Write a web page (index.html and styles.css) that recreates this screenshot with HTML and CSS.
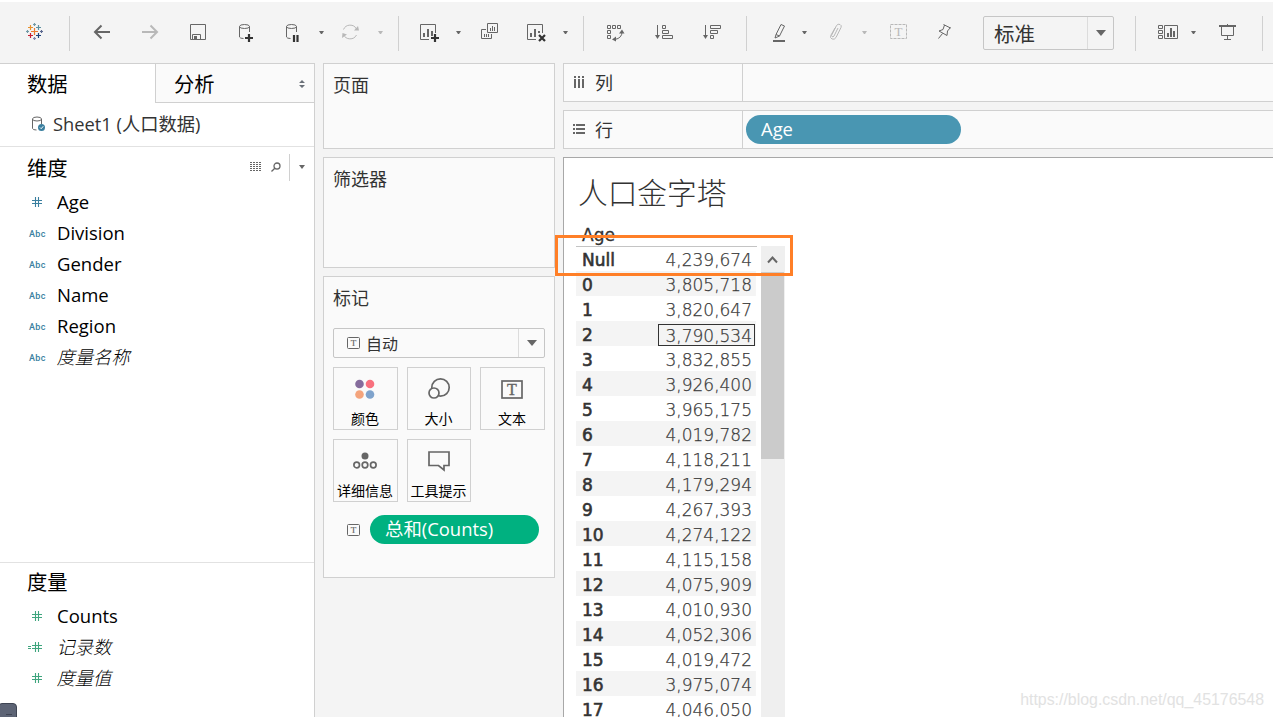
FILE: index.html
```html
<!DOCTYPE html>
<html lang="zh-CN">

<head>
    <meta charset="UTF-8">
    <meta name="viewport" content="width=device-width, initial-scale=1.0">
    <title>人口金字塔</title>
    <link rel="stylesheet" href="styles.css">
</head>

<body>

    <div class="toolbar">
        <svg class="icon logo" viewBox="0 0 24 24">
            <path stroke="#eb7b30" d="M12.500 8v7M9 11.500h7" />
            <path stroke="#e8912d" d="M8.500 5v5M6 7.500h5" />
            <path stroke="#5c8fa0" d="M16.500 5v5M14 7.500h5" />
            <path stroke="#c72035" d="M8.500 13v5M6 15.500h5" />
            <path stroke="#1f457e" d="M16.500 13v5M14 15.500h5" />
            <path stroke="#7099a6" d="M12.500 3v3M11 4.500h3" />
            <path stroke="#8088b0" d="M12.500 17v3M11 18.500h3" />
            <path stroke="#7199a6" d="M5.500 10v3M4 11.500h3" />
            <path stroke="#59678f" d="M19.500 10v3M18 11.500h3" />
        </svg>
        <i class="line l1"></i>
        <svg class="icon back" viewBox="0 0 24 24"><path stroke-width="2" d="M20 12H5M11.500 5.500L5 12l6.500 6.500" /></svg>
        <svg class="icon off" viewBox="0 0 24 24"><path stroke-width="2" d="M4 12h15M12.500 5.500L19 12l-6.500 6.500" /></svg>
        <svg class="icon" viewBox="0 0 24 24"><path d="M4.500 4.500h15v15h-15zM6.500 19v-4.500h8V19" /><path class="fill" d="M8 16h3v3H8z" /></svg>
        <svg class="icon" viewBox="0 0 24 24">
            <ellipse cx="10.500" cy="6.500" rx="5" ry="2" /><path d="M5.500 6.500V17q.5 1.500 4 1.500M15.500 6.500V12" />
            <path class="dark" d="M15 14v8M11 18h8" />
        </svg>
        <svg class="icon pause" viewBox="0 0 24 24">
            <ellipse cx="11.500" cy="6.500" rx="5" ry="2" /><path d="M6.500 6.500V17q.5 1.500 4 1.500M16.500 6.500V12" />
            <path class="dark" d="M14 15v7M17.500 15v7" />
        </svg>
        <i class="caret"></i>
        <svg class="icon off refresh" viewBox="0 0 24 24">
            <path d="M5.500 9.500A7.200 7.200 0 0 1 18.500 9M5.500 14.500A7.200 7.200 0 0 0 18.500 15" />
            <path class="fill" d="M16 10.500h5l-1-4.500zM4 18l.5-5 4.500 1.500z" />
        </svg>
        <i class="caret off c2"></i>
        <i class="line l2"></i>
        <svg class="icon sheet" viewBox="0 0 24 24">
            <path d="M12 19.500H3.500v-15h15V13" /><path stroke-width="2" d="M7 13v4M11 9v8M15 11v5" />
            <path class="dark" d="M18 14v8M14 18h8" />
        </svg>
        <i class="caret"></i>
        <svg class="icon dup" viewBox="0 0 24 24">
            <path d="M9.500 3.500h10v9h-10zM12.500 8v3M14.500 6v5M16.500 7v4M8 9.500H3.500v9h10V14M6.500 14v3M8.500 14v3M10.500 14v3" />
        </svg>
        <svg class="icon clear" viewBox="0 0 24 24">
            <path d="M11 19.500H2.500v-15h15V13" /><path stroke-width="2" d="M6 13v4M10 9v8M14 11v2" />
            <path class="dark" d="M14 15l6 6M20 15l-6 6" />
        </svg>
        <i class="caret"></i>
        <i class="line l3"></i>
        <svg class="icon swap" viewBox="0 0 24 24">
            <path d="M3.500 5.500h3v3h-3zM8.500 5.500h3v3h-3zM13.500 5.500h3v3h-3zM3.500 10.500h3v3h-3zM3.500 15.500h3v3h-3zM18 12q0 6-7 7.500" />
            <path class="fill" d="M15 13.500h5.500L18 9.500zM12 16.500v5l-4-2z" />
        </svg>
        <svg class="icon" viewBox="0 0 24 24">
            <path d="M5.500 5v12M10.500 5.500h3v3h-3zM10.500 10.500h6v3h-6zM10.500 15.500h10v3h-10z" /><path class="fill" d="M3 15h5l-2.500 4z" />
        </svg>
        <svg class="icon" viewBox="0 0 24 24">
            <path d="M5.500 5v12M10.500 5.500h10v3h-10zM10.500 10.500h7v3h-7zM10.500 15.500h3v3h-3z" /><path class="fill" d="M3 15h5l-2.500 4z" />
        </svg>
        <i class="line l4"></i>
        <svg class="icon pen" viewBox="0 0 24 24">
            <path d="M14 4.500l3.500 1.500-5 10-3.500-1.500zM9 14.500l-1 3.500 4.500-2" /><path stroke-width="2" d="M6 21h12" />
        </svg>
        <i class="caret c4"></i>
        <svg class="icon off clip" viewBox="0 0 24 24">
            <path d="M14 8l-4 8q-1 1.500-2 .5t0-2l4.500-9q1.500-2 3.500-1t1 3l-5 10q-1.500 2.500-4 1.500t-1-4l4-7" />
        </svg>
        <i class="caret off c5"></i>
        <svg class="icon off label" viewBox="0 0 24 24">
            <rect x="4.500" y="4.500" width="16" height="14" stroke-dasharray="3 1" /><text x="12.500" y="16">T</text>
        </svg>
        <svg class="icon pin" viewBox="0 0 24 24">
            <path d="M11.500 4.500l7 3.500M12.500 5l-1.500 4.500-4 1.500 8 4.500.5-4.500 3-3.500M10.500 13.500l-4 5" />
        </svg>
        <div class="select fit"><span>标准</span><b></b></div>
        <i class="line l5"></i>
        <svg class="icon show" viewBox="0 0 24 24">
            <path d="M2.500 5.500h4v3h-4zM2.500 10.500h4v3h-4zM2.500 15.500h4v3h-4zM8.500 5.500h13v13h-13z" /><path stroke-width="2" d="M12 13v4M15 8v9M18 11v6" />
        </svg>
        <i class="caret"></i>
        <svg class="icon present" viewBox="0 0 24 24">
            <path stroke-width="2" d="M3 6h17" /><path d="M5.500 6v9.500h12V6M11.500 4v2M11.500 15.500v4M8 19.500h7" />
        </svg>
        <i class="line l6"></i>
    </div>

    <div class="main">
        <div class="data">
            <div class="tabs">
                <div class="tab on">数据</div>
                <div class="tab">分析
                    <svg class="updown" viewBox="0 0 6 8"><path d="M0 3l3-3 3 3zM0 5h6L3 8z" /></svg>
                </div>
            </div>
            <div class="source">
                <svg class="db" viewBox="0 0 16 18">
                    <ellipse cx="6" cy="4" rx="4.500" ry="2" /><path d="M1.500 4v9.500q.5 1.500 4 1.500M10.500 4v5" />
                    <circle cx="10.500" cy="12.500" r="3.500" /><path class="tick" d="M9 12.500l1.200 1.200 2-2.400" />
                </svg>
                <span>Sheet1 (人口数据)</span>
            </div>
            <div class="fields dims">
                <div class="head">
                    <h2>维度</h2>
                    <svg class="list" viewBox="0 0 12 10"><path stroke-dasharray="2 1" d="M0 .5h12M0 2.500h12M0 4.500h12M0 6.500h12M0 8.500h12" /></svg>
                    <svg class="search" viewBox="0 0 10 10"><circle cx="6" cy="4" r="3" /><path d="M3.800 6.200L.5 9.500" /></svg>
                    <b></b>
                </div>
                <ul>
                    <li><svg class="hash" viewBox="0 0 14 11"><path d="M6.500 0v10M9.500 0v10M3 3.500h10M3 6.500h10" /></svg><span>Age</span></li>
                    <li><em>Abc</em><span>Division</span></li>
                    <li><em>Abc</em><span>Gender</span></li>
                    <li><em>Abc</em><span>Name</span></li>
                    <li><em>Abc</em><span>Region</span></li>
                    <li class="auto"><em>Abc</em><span>度量名称</span></li>
                </ul>
            </div>
            <div class="fields measures">
                <div class="head">
                    <h2>度量</h2>
                </div>
                <ul>
                    <li><svg class="hash" viewBox="0 0 14 11"><path d="M6.500 0v10M9.500 0v10M3 3.500h10M3 6.500h10" /></svg><span>Counts</span></li>
                    <li class="auto"><svg class="hash" viewBox="0 0 14 11"><path d="M6.500 0v10M9.500 0v10M3 3.500h10M3 6.500h10M-1 4.500h3M-1 6.500h3" /></svg><span>记录数</span></li>
                    <li class="auto"><svg class="hash" viewBox="0 0 14 11"><path d="M6.500 0v10M9.500 0v10M3 3.500h10M3 6.500h10" /></svg><span>度量值</span></li>
                </ul>
            </div>
            <div class="handle"><i></i></div>
        </div>

        <div class="cards">
            <div class="card pages"><h3>页面</h3></div>
            <div class="card filters"><h3>筛选器</h3></div>
            <div class="card marks">
                <h3>标记</h3>
                <div class="select type">
                    <svg class="tbox" viewBox="0 0 13 12"><rect x=".5" y=".5" width="12" height="11" rx="1" /><text x="6.500" y="9">T</text></svg>
                    <span>自动</span><b></b>
                </div>
                <div class="buttons">
                    <div class="btn">
                        <svg viewBox="0 0 24 24">
                            <circle cx="6.500" cy="7" r="4.300" fill="#856c9c" stroke="none" /><circle cx="17" cy="7" r="4.300" fill="#f8707e" stroke="none" />
                            <circle cx="6.500" cy="17.500" r="4.300" fill="#f4a47c" stroke="none" /><circle cx="17" cy="17.500" r="4.300" fill="#7fa3cc" stroke="none" />
                        </svg>
                        <span>颜色</span>
                    </div>
                    <div class="btn">
                        <svg viewBox="0 0 24 24"><circle cx="13.500" cy="10.500" r="8.700" /><circle cx="7" cy="16" r="5" fill="#fafafa" /></svg>
                        <span>大小</span>
                    </div>
                    <div class="btn">
                        <svg viewBox="0 0 24 24"><rect x="2" y="4" width="20" height="17" /><text x="12" y="18">T</text></svg>
                        <span>文本</span>
                    </div>
                    <div class="btn">
                        <svg viewBox="0 0 24 24">
                            <circle cx="12" cy="7" r="3.500" fill="#666" stroke="none" /><circle cx="3.700" cy="16" r="2.800" />
                            <circle cx="12" cy="16" r="2.800" /><circle cx="20.300" cy="16" r="2.800" />
                        </svg>
                        <span>详细信息</span>
                    </div>
                    <div class="btn">
                        <svg viewBox="0 0 24 24"><path d="M2 3h20v13.500h-5V21l-5.500-4.500H2z" /></svg>
                        <span>工具提示</span>
                    </div>
                </div>
                <div class="mark">
                    <svg class="tbox" viewBox="0 0 13 12"><rect x=".5" y=".5" width="12" height="11" rx="1" /><text x="6.500" y="9">T</text></svg>
                    <div class="pill green">总和(Counts)</div>
                </div>
            </div>
        </div>

        <div class="sheet-area">
            <div class="shelf">
                <div class="name"><svg viewBox="0 0 12 12"><path d="M2 0v2M6 0v2M10 0v2M2 3v9M6 3v9M10 3v9" /></svg>列</div>
            </div>
            <div class="shelf">
                <div class="name"><svg viewBox="0 0 12 12"><path d="M0 2h2M0 6h2M0 10h2M3 2h9M3 6h9M3 10h9" /></svg>行</div>
                <div class="pill blue">Age</div>
            </div>
            <div class="view">
                <h1>人口金字塔</h1>
                <div class="field-name">Age</div>
                <div class="table-box">
                    <table>
                        <tr><th>Null</th><td>4,239,674</td></tr>
                        <tr><th>0</th><td>3,805,718</td></tr>
                        <tr><th>1</th><td>3,820,647</td></tr>
                        <tr><th>2</th><td><span class="picked">3,790,534</span></td></tr>
                        <tr><th>3</th><td>3,832,855</td></tr>
                        <tr><th>4</th><td>3,926,400</td></tr>
                        <tr><th>5</th><td>3,965,175</td></tr>
                        <tr><th>6</th><td>4,019,782</td></tr>
                        <tr><th>7</th><td>4,118,211</td></tr>
                        <tr><th>8</th><td>4,179,294</td></tr>
                        <tr><th>9</th><td>4,267,393</td></tr>
                        <tr><th>10</th><td>4,274,122</td></tr>
                        <tr><th>11</th><td>4,115,158</td></tr>
                        <tr><th>12</th><td>4,075,909</td></tr>
                        <tr><th>13</th><td>4,010,930</td></tr>
                        <tr><th>14</th><td>4,052,306</td></tr>
                        <tr><th>15</th><td>4,019,472</td></tr>
                        <tr><th>16</th><td>3,975,074</td></tr>
                        <tr><th>17</th><td>4,046,050</td></tr>
                    </table>
                    <div class="scroll">
                        <svg viewBox="0 0 24 26"><path d="M7 16.500l4.500-5 4.500 5" /></svg>
                        <div class="thumb"></div>
                    </div>
                    <div class="frame"></div>
                </div>
                <div class="watermark">https://blog.csdn.net/qq_45176548</div>
            </div>
        </div>
    </div>

</body>

</html>
```
FILE: styles.css
```css
* {
    margin: 0;
    padding: 0;
    box-sizing: border-box;
}

body {
    width: 1273px;
    height: 717px;
    overflow: hidden;
    border-top: 2px solid #fff;
    background: #f4f4f4;
    color: #333;
    font-family: "Open Sans", "Noto Sans CJK SC", sans-serif;
    font-size: 18px;
}

ul {
    list-style: none;
}

svg {
    flex: none;
    overflow: visible;
    fill: none;
    stroke: #666;
}

svg text {
    fill: #666;
    stroke: none;
    text-anchor: middle;
    font-family: "Liberation Serif", serif;
}

/* 工具栏 */
.toolbar {
    display: flex;
    align-items: center;
    height: 61px;
}

.icon {
    width: 24px;
    height: 24px;
    margin-left: 24px;
    margin-bottom: 1px;
}

.icon .fill {
    fill: #666;
    stroke: none;
}

.icon .dark {
    stroke: #333;
    stroke-width: 2.2;
}

.icon.off {
    stroke: #b8b8b8;
}

.icon.off .fill,
.icon.off text {
    fill: #b8b8b8;
}

.label text {
    font-size: 13px;
}

.line {
    width: 1px;
    height: 35px;
    margin-top: 2px;
    background: #d0d0d0;
}

.caret {
    margin-left: 13px;
    border: 2.5px solid transparent;
    border-top: 3px solid #666;
    border-bottom: 0;
    width: 5px;
    margin-right: 3px;
}

.caret.off {
    border-top-color: #b8b8b8;
}

.logo { margin-left: 22px; stroke-width: 1.2; }
.l1 { margin-left: 23px; }
.back { margin-left: 20px; }
.pause { margin-left: 22px; }
.icon.pause + .caret { margin-left: 15px; }
.refresh { margin-left: 11px; }
.c2 { margin-left: 16px; }
.l2 { margin-left: 12px; }
.sheet { margin-left: 18px; }
.icon.sheet + .caret { margin-left: 15px; }
.dup { margin-left: 14px; }
.clear { margin-left: 23px; }
.icon.clear + .caret { margin-left: 14px; }
.l3 { margin-left: 12px; }
.swap { margin-left: 20px; }
.l4 { margin-left: 22px; }
.pen { margin-left: 20px; }
.c4 { margin-left: 11px; }
.clip { margin-left: 14px; }
.c5 { margin-left: 14px; }
.label { margin-left: 16px; }
.pin { margin-left: 22px; }
.l5 { margin-left: 21px; }
.show { margin-left: 20px; }
.icon.show + .caret { margin-left: 11px; }
.present { margin-left: 17px; }
.l6 { margin-left: 22px; }

.select {
    display: flex;
    align-items: center;
    border: 1px solid #c6c6c6;
    border-radius: 2px;
}

.select span {
    flex: 1;
}

.select b {
    display: flex;
    align-items: center;
    justify-content: center;
    width: 26px;
    height: 100%;
    border-left: 1px solid #dcdcdc;
}

.select b::before {
    content: "";
    border: 5.5px solid transparent;
    border-top: 6px solid #666;
    border-bottom: 0;
}

.fit {
    width: 131px;
    height: 34px;
    margin-left: 27px;
    margin-top: 1px;
    padding-left: 10px;
    font-size: 20.5px;
}

/* 三栏 */
.main {
    display: grid;
    grid-template-columns: 315px 232px 710px;
    gap: 8px;
    height: 654px;
}

.data {
    display: flex;
    flex-direction: column;
    border-top: 1px solid #d0d0d0;
    border-right: 1px solid #d0d0d0;
    background: #fff;
    color: #000;
    position: relative;
}

.tabs {
    display: flex;
    height: 39px;
    font-size: 20.3px;
    line-height: 42px;
}

.tab {
    display: flex;
    align-items: center;
    justify-content: space-between;
    width: 159px;
    padding: 1px 9px 0 18px;
    border-left: 1px solid #d0d0d0;
    border-bottom: 1px solid #d0d0d0;
    background: #fafafa;
}

.tab.on {
    width: 155px;
    padding-left: 27px;
    border: 0;
    background: #fff;
}

.updown {
    width: 6px;
    height: 8px;
    fill: #6a7078;
    stroke: none;
}

.source {
    display: flex;
    align-items: center;
    height: 44px;
    padding-left: 31px;
    border-bottom: 1px solid #e2e2e2;
    color: #333;
    font-size: 18.3px;
}

.source span {
    padding-bottom: 3px;
}

.db {
    width: 16px;
    height: 18px;
    margin-right: 6px;
    margin-bottom: 1px;
}

.db circle {
    fill: #3a7f9f;
    stroke: none;
}

.db .tick {
    stroke: #fff;
}

.dims {
    height: 416px;
    border-bottom: 1px solid #e2e2e2;
}

.head {
    display: flex;
    align-items: center;
    height: 40px;
    padding-left: 27px;
}

.measures .head {
    height: 38px;
    padding-bottom: 2px;
}

.head h2 {
    flex: 1;
    font-size: 20.3px;
    font-weight: normal;
    line-height: 38px;
    padding-top: 2px;
}

.list {
    width: 12px;
    height: 10px;
    margin-right: 9px;
}

.search {
    width: 10px;
    height: 10px;
    margin-right: 8px;
    stroke-width: 1.3;
}

.head b {
    display: flex;
    align-items: center;
    justify-content: center;
    width: 25px;
    height: 27px;
    border-left: 1px solid #d0d0d0;
}

.head b::before {
    content: "";
    border: 3.5px solid transparent;
    border-top: 4px solid #666;
    border-bottom: 0;
}

.fields li {
    display: flex;
    align-items: center;
    height: 31px;
    padding-left: 29px;
    font-size: 18.5px;
    line-height: 29px;
}

.fields li span {
    padding-bottom: 2px;
}

.fields em {
    width: 28px;
    color: #3a7f9f;
    font: 500 9px Roboto, sans-serif;
    letter-spacing: .4px;
}

.hash {
    width: 14px;
    height: 11px;
    margin-right: 14px;
    stroke: #3a7f9f;
    stroke-width: 1.1;
}

.measures .hash {
    stroke: #3fa57e;
}

.fields .auto span {
    margin-left: 1px;
    transform: skewX(-14deg);
    font-size: 18.3px;
    font-weight: 300;
}

.handle {
    position: absolute;
    left: -2px;
    bottom: -5px;
    width: 19px;
    height: 23px;
    padding: 10px 5px;
    border: 1px solid #3f4553;
    border-radius: 4px;
    background: #5d6475;
}

.handle i {
    display: block;
    width: 6px;
    height: 8px;
    margin-left: 2px;
    background: repeating-linear-gradient(#3f4553 0 1px, #5d6475 1px 3px);
}

.cards {
    display: flex;
    flex-direction: column;
    gap: 8px;
}

.card {
    padding: 9px;
    border: 1px solid #d0d0d0;
    background: #fafafa;
}

.card h3 {
    font-size: 18px;
    font-weight: normal;
    line-height: 24px;
}

.pages {
    height: 86px;
}

.filters {
    height: 111px;
}

.marks {
    height: 302px;
}

.type {
    height: 30px;
    margin-top: 18px;
    padding-left: 13px;
    font-size: 16px;
}

.type span {
    padding-bottom: 1px;
}

.tbox {
    width: 13px;
    height: 12px;
}

.tbox text {
    font-size: 9px;
    stroke: #666;
    stroke-width: .2;
}

.type .tbox {
    margin-right: 6px;
}

.buttons {
    display: grid;
    grid-template-columns: 65px 64px 65px;
    gap: 9px;
    margin-top: 9px;
}

.btn {
    display: flex;
    flex-direction: column;
    align-items: center;
    height: 63px;
    padding-top: 9px;
    padding-right: 1px;
    border: 1px solid #d0d0d0;
    color: #000;
    font-size: 14px;
    line-height: 20px;
    white-space: nowrap;
}

.btn svg {
    width: 24px;
    height: 24px;
    margin-bottom: 8px;
    stroke-width: 1.7;
}

.btn text {
    font-size: 16px;
    stroke: #666;
    stroke-width: .4;
}

.mark {
    display: flex;
    align-items: center;
    margin-top: 13px;
    padding-left: 14px;
}

.pill {
    height: 29px;
    border-radius: 15px;
    padding-left: 15px;
    color: #fff;
    font-size: 18.4px;
    line-height: 28px;
}

.green {
    width: 169px;
    margin-left: 10px;
    background: #00b180;
}

.blue {
    width: 215px;
    margin-left: 3px;
    background: #4996b2;
}

.sheet-area {
    display: flex;
    flex-direction: column;
    gap: 8px;
}

.shelf {
    display: flex;
    align-items: center;
    height: 39px;
    border: 1px solid #d0d0d0;
    border-right: 0;
    background: #fafafa;
}

.name {
    display: flex;
    align-items: center;
    width: 179px;
    height: 37px;
    padding-left: 9px;
    padding-bottom: 1px;
    border-right: 1px solid #d0d0d0;
}

.name svg {
    width: 12px;
    height: 12px;
    margin-right: 10px;
    stroke-width: 2;
}

.view {
    flex: 1;
    border: 1px solid #a8a8a8;
    border-width: 1px 0 0 1px;
    padding: 13px 0 0 12px;
    background: #fff;
    position: relative;
}

.view h1 {
    padding-left: 2px;
    font-size: 29.7px;
    font-weight: 300;
    line-height: 44px;
}

.field-name {
    height: 31px;
    padding: 8px 0 0 6px;
    font: 17px/24px "DejaVu Sans", sans-serif;
    -webkit-text-stroke: .3px #333;
}

.table-box {
    display: flex;
    align-items: flex-start;
    position: relative;
}

table {
    width: 181px;
    border-collapse: collapse;
    background: linear-gradient(#c4c4c4, #c4c4c4) 0 0 / 181px 1px no-repeat;
    font-size: 17px;
    line-height: 21px;
}

tr {
    height: 25px;
}

tr:nth-child(even) {
    background: linear-gradient(#f4f4f4, #f4f4f4) 0 0 / 180px 25px no-repeat;
}

th {
    padding-top: 4px;
    padding-left: 6px;
    text-align: left;
    font-family: "DejaVu Sans", sans-serif;
    font-weight: normal;
    -webkit-text-stroke: .6px #333;
}

td {
    padding-top: 4px;
    padding-right: 5px;
    text-align: right;
    font-family: "DejaVu Sans Light", "DejaVu Sans", sans-serif;
    font-weight: 200;
    -webkit-text-stroke: .25px #444;
}

.picked {
    display: block;
    width: 97px;
    height: 22px;
    margin: -2px -3px 0 auto;
    padding-right: 2px;
    border: 1px solid #333;
    line-height: 22px;
}

.scroll {
    width: 24px;
    height: 475px;
    margin-left: 4px;
    background: #efefef;
}

.scroll svg {
    display: block;
    width: 24px;
    height: 26px;
    stroke-width: 2;
}

.thumb {
    width: 23px;
    height: 187px;
    background: #cbcbcb;
}

/* 标注框 */
.frame {
    position: absolute;
    left: -21px;
    top: -11px;
    width: 238px;
    height: 41px;
    border: 3px solid #ff7f27;
}

.watermark {
    position: absolute;
    right: 9px;
    bottom: 11px;
    color: #e2e2e2;
    font: 15.9px/20px "Liberation Sans", sans-serif;
}
```
